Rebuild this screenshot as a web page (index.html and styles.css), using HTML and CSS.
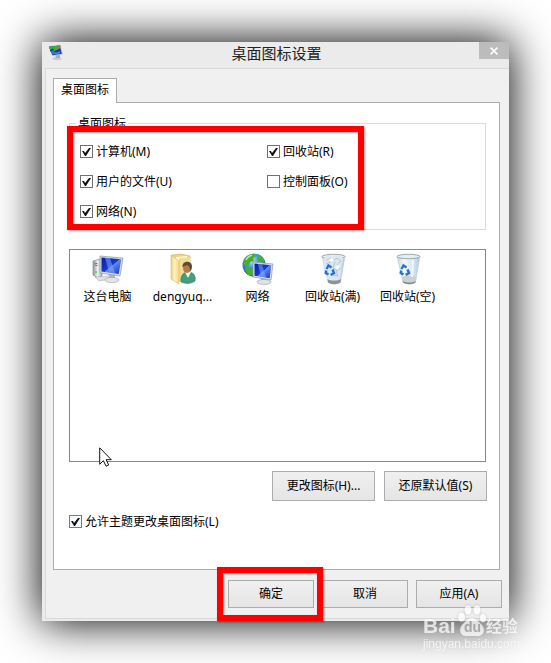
FILE: index.html
```html
<!DOCTYPE html>
<html lang="zh-CN">
<head>
<meta charset="utf-8">
<meta name="viewport" content="width=device-width">
<title>桌面图标设置</title>
<link rel="stylesheet" href="styles.css">
</head>
<body>
<main class="window">
  <header class="titlebar">
    <svg class="title-icon" viewBox="0 0 16 17" aria-hidden="true">
      <ellipse cx="9" cy="14.6" rx="4.5" ry="1.7" fill="#c9cccd"/>
      <path d="M7 11l5-1v4H8z" fill="#a9adb2"/>
      <path d="M.5 2l12-1.500 2.500 10-10.500 1.500z" fill="#c3cbd3"/>
      <path d="M1 2.800l10.800-1.300 2 8.300-9.500 1.500z" fill="#1c3fae"/>
      <path d="M1 2.800l10.300-1.300.7 3-4 1-2 2-3.500.5z" fill="#2fb33f"/>
      <path d="M2 6l3-1.500 1 1.500-3.500 1.500z" fill="#123a8c"/>
      <path d="M7.500 6l5-4" stroke="#e0662c" stroke-width="1.500"/>
      <path d="M4 9.500c2-1.500 5 1 8-1.500" stroke="#79b8f3" fill="none"/>
    </svg>
    <h1 class="title">桌面图标设置</h1>
    <button class="close" type="button" aria-label="关闭">
      <svg viewBox="0 0 8 8" aria-hidden="true"><path d="M.6.6l6.800 6.800M7.400.6L.6 7.400" stroke="#fff" stroke-width="1.700"/></svg>
    </button>
  </header>

  <form class="client">
    <button class="tab" type="button">桌面图标</button>
    <section class="panel">
      <fieldset class="group">
        <legend>桌面图标</legend>
        <div class="options">
          <label class="check"><input type="checkbox" checked>计算机(M)</label>
          <label class="check"><input type="checkbox" checked>回收站(R)</label>
          <label class="check"><input type="checkbox" checked>用户的文件(U)</label>
          <label class="check"><input type="checkbox">控制面板(O)</label>
          <label class="check"><input type="checkbox" checked>网络(N)</label>
        </div>
        <span class="mark mark-options"></span>
      </fieldset>

      <div class="list">
        <figure class="item">
          <svg viewBox="0 0 32 32" aria-hidden="true">
            <defs>
              <linearGradient id="screen" x1="0" y1="0" x2="1" y2="1"><stop offset="0" stop-color="#0b1fa0"/><stop offset=".5" stop-color="#1638d8"/><stop offset=".52" stop-color="#5d8cf4"/><stop offset="1" stop-color="#1130c0"/></linearGradient>
              <linearGradient id="metal" x1="0" y1="0" x2="1" y2="0"><stop offset="0" stop-color="#8d959b"/><stop offset=".5" stop-color="#eef1f2"/><stop offset="1" stop-color="#a7afb5"/></linearGradient>
            </defs>
            <path d="M1 8l7-2 2 1v16l-4 2-5-3z" fill="url(#metal)" stroke="#858d93" stroke-width=".7"/>
            <path d="M2.500 10l3 .7M2.500 12l3 .7" stroke="#687178"/><circle cx="4" cy="19" r="1" fill="#50c840"/>
            <path d="M3 24l12-1 3 3-11 2z" fill="#dce0e2" stroke="#a9afb3" stroke-width=".6"/>
            <path d="M16 20l7 1v5h-6z" fill="#aeb6bb"/><ellipse cx="20" cy="27" rx="7" ry="2.600" fill="#e0e4e5" stroke="#9ca5ab" stroke-width=".6"/>
            <path d="M8 3l23 2-3 18-20-3z" fill="#d7dde1" stroke="#8d98a2" stroke-width=".7"/>
            <path d="M9.500 4.500l19.800 1.800-2.600 14.700-17.200-2.500z" fill="url(#screen)"/>
            <path d="M18 5.300l5 14.900-6-.9-4-14.500z" fill="#86a7f8" opacity=".55"/>
          </svg>
          <figcaption>这台电脑</figcaption>
        </figure>
        <figure class="item">
          <svg viewBox="0 0 32 32" aria-hidden="true">
            <defs><linearGradient id="folder" x1="0" y1="0" x2="1" y2="0"><stop offset="0" stop-color="#ecd083"/><stop offset=".45" stop-color="#fff3b8"/><stop offset="1" stop-color="#f0d98a"/></linearGradient></defs>
            <path d="M5 2l9-1 9 2v23l-13 3z" fill="#ecd282" stroke="#cfae58" stroke-width=".6"/>
            <path d="M9 4l11-1v22H9z" fill="#fffbe0"/>
            <path d="M12 5l11-1v21l-11 4z" fill="#f3dd93"/>
            <path d="M4 2l8 6v23l-8-5z" fill="url(#folder)" stroke="#dabb62" stroke-width=".6"/>
            <path d="M14 29c-1-7 3-10 7-10 5 0 8 3 7 9-4 3-10 3-14 1z" fill="#439e7d" stroke="#287d5f" stroke-width=".6"/>
            <path d="M18 19l3 6 3-6z" fill="#eff8f2"/><ellipse cx="20" cy="15" rx="4" ry="5" fill="#b97849"/>
            <path d="M15.500 14c-.7-6 8-7 9.300-2 .7 3-.8 6-1.800 6 0-4-1-5-3-6-1 1-3 1-4.500 2z" fill="#5a4a3d"/>
          </svg>
          <figcaption>dengyuq...</figcaption>
        </figure>
        <figure class="item">
          <svg viewBox="0 0 32 32" aria-hidden="true">
            <defs><radialGradient id="globe" cx=".4" cy=".3" r=".7"><stop offset="0" stop-color="#b7e8fa"/><stop offset=".5" stop-color="#3490d4"/><stop offset="1" stop-color="#124c9d"/></radialGradient></defs>
            <circle cx="12" cy="12" r="11.500" fill="url(#globe)"/>
            <path d="M2 7c2-4 6-6 10-6l2 2-3 2 1 3-4 1-1 4-5-1zM15 1c4 1 7 4 8 8l-5 1-3-4 2-2zM3 15l5-1 4 3-1 5-3 1c-3-2-5-4-5-8z" fill="#48ad31"/>
            <path d="M4 7c1-3 4-4 6-5" fill="none" stroke="#c5ef9c" stroke-width="1.200"/>
            <path d="M19 22l6 1v5h-6z" fill="#a6afb6"/><ellipse cx="22" cy="29" rx="7" ry="2.500" fill="#dfe3e5" stroke="#98a3aa" stroke-width=".6"/>
            <path d="M11 9l20 2-2 16-18-3z" fill="#dbe1e5" stroke="#8998a6" stroke-width=".7"/>
            <path d="M12.500 10.500l16.800 1.800-1.600 13-15.200-2.500z" fill="url(#screen)"/>
            <path d="M20 11.300l4 13.300-5-.7-3-13z" fill="#8cadf9" opacity=".5"/>
          </svg>
          <figcaption>网络</figcaption>
        </figure>
        <figure class="item">
          <svg viewBox="0 0 32 32" aria-hidden="true">
            <defs>
              <linearGradient id="glass" x1="0" y1="0" x2="1" y2="0"><stop offset="0" stop-color="#c3d3e0"/><stop offset=".3" stop-color="#f5faff"/><stop offset=".75" stop-color="#cfe3f6"/><stop offset="1" stop-color="#b3c8db"/></linearGradient>
              <g id="recycle" fill="none" stroke="#2a72d0" stroke-width="2.500"><path d="M9.500 16l2-3.500 3 2"/><path d="M15.500 16.500l1.500 3.500-3.300 2"/><path d="M11.500 21.500l-2.700-1.500.4-2.500"/></g>
            </defs>
            <path d="M5 3h23l-4.500 26c-3 2.700-9.500 2.700-12.500 0z" fill="url(#glass)" stroke="#b9c8d4" stroke-width=".6"/>
            <path d="M10.500 26c4 2 9.500 2 13.500 0l-.5 3.500c-3 2.300-9.500 2.300-12.500 0z" fill="#8d9294"/>
            <ellipse cx="16.500" cy="3.500" rx="11.500" ry="2.200" fill="#e8eef2" stroke="#8e9598" stroke-width=".8"/>
            <path d="M6.500 5l5-3 4 2 5-2 6 3-2 7-1 2 .5 5-2.500 6-6 2-6-2-3-9z" fill="#dce7f1"/>
            <path d="M10 7l4-2 1 4 5-4 4 3-4 4 3 4-4 2 2 5-5-1M9 11l5-2M18 9l-2 6 5 3" fill="none" stroke="#a9bfd2" stroke-width=".9"/>
            <path d="M12 6l2 3 3-1-2-3zM20 12l3 1-2 4-3-2z" fill="#f8fcff"/>
            <use href="#recycle"/>
          </svg>
          <figcaption>回收站(满)</figcaption>
        </figure>
        <figure class="item">
          <svg viewBox="0 0 32 32" aria-hidden="true">
            <path d="M5 3h23l-4.500 26c-3 2.700-9.500 2.700-12.500 0z" fill="url(#glass)" stroke="#b9c8d4" stroke-width=".6"/>
            <path d="M10 24c4-2 10.500-2 14.500 0l-1 5c-3 2.500-9.500 2.500-12.500 0z" fill="#ccd1d4"/>
            <path d="M10.800 28c4 2 9 2 13 0l-.3 1.500c-3 2.300-9.500 2.300-12.500 0z" fill="#858a8d"/>
            <ellipse cx="16.500" cy="3.500" rx="11.500" ry="2.200" fill="#e3effa" stroke="#8e9598" stroke-width=".8"/>
            <path d="M21 7l-1 17" stroke="#fff" stroke-width="2" opacity=".7"/>
            <use href="#recycle"/>
          </svg>
          <figcaption>回收站(空)</figcaption>
        </figure>
        <svg class="cursor" viewBox="0 0 13 20" aria-hidden="true"><path d="M.7.8v16.500l3.700-3.600 2.700 5.500 2.600-1.200-2.600-5.300h5.200z" fill="#fff" stroke="#111" stroke-width="1"/></svg>
      </div>

      <div class="actions">
        <button class="btn btn-wide" type="button">更改图标(H)...</button>
        <button class="btn btn-wide" type="button">还原默认值(S)</button>
      </div>
      <label class="check check-theme"><input type="checkbox" checked>允许主题更改桌面图标(L)</label>
    </section>

    <footer class="footer">
      <div class="confirm">
        <button class="btn" type="button">确定</button>
        <span class="mark mark-confirm"></span>
      </div>
      <button class="btn" type="button">取消</button>
      <button class="btn" type="button">应用(A)</button>
    </footer>
  </form>

  <div class="watermark">
    <div class="brand">
      <span class="bai">Bai</span>
      <span class="paw">
        <svg viewBox="0 0 28 31" aria-hidden="true"><g fill="#fff"><ellipse cx="3.500" cy="12" rx="3.500" ry="4.500"/><ellipse cx="10" cy="5" rx="3.500" ry="4.800"/><ellipse cx="19" cy="5" rx="3.500" ry="4.800"/><ellipse cx="25" cy="13" rx="3" ry="4.300"/><path d="M14 13c4 0 6 3 9 6 5 5 3 12-3 12H8c-6 0-8-7-3-12 3-3 5-6 9-6z"/></g></svg>
        <span class="du">du</span>
      </span>
      <span class="jingyan">经验</span>
    </div>
    <div class="site">jingyan.baidu.com</div>
  </div>
</main>
</body>
</html>
```
FILE: styles.css
```css
* { box-sizing: border-box; }

body {
  margin: 0;
  padding: 42px;
  background: #fff;
  color: #000;
  font: 12px/16px "Noto Sans", "Noto Sans CJK SC", sans-serif;
}

button { font: inherit; color: inherit; padding: 0; }

.window {
  position: relative;
  background: #ebebeb;
  box-shadow: 0 0 42px 1px #000;
  padding-bottom: 2px;
}

.titlebar {
  display: grid;
  grid-template-columns: 32px 1fr 30px;
  height: 26px;
}

.title-icon { width: 16px; height: 17px; margin: 2px 0 0 6px; }

.title {
  margin: 0;
  text-align: center;
  font-size: 15px;
  font-weight: 400;
  line-height: 22px;
  color: #222;
}

.close {
  display: flex;
  align-items: center;
  justify-content: center;
  height: 17px;
  border: 0;
  background: #bcbcbc;
}

.close svg { width: 8px; height: 8px; }

.client {
  margin-left: 3px;
  padding: 9px 7px 10px;
  border: solid #d9d9d9;
  border-width: 1px 0 1px 1px;
  background: #f0f0f0;
}

.tab {
  display: block;
  position: relative;
  width: 64px;
  height: 25px;
  margin-bottom: -1px;
  padding-bottom: 2px;
  border: 1px solid #acacac;
  border-bottom: 0;
  background: #fff;
}

.panel {
  margin-right: 2px;
  padding: 13px 12px 41px 15px;
  border: 1px solid #acacac;
  background: #fff;
}

.group {
  position: relative;
  margin: 0 1px 0 0;
  padding: 0;
  border: 1px solid #dcdcdc;
}

.group legend {
  margin-left: 6px;
  padding: 0 2px;
  line-height: 15px;
}

.options {
  display: grid;
  grid-template-columns: 187px 1fr;
  gap: 17px 0;
  padding: 14px 10px 11px;
}

.check {
  display: flex;
  align-items: center;
  gap: 3px;
  height: 13px;
}

.check input {
  appearance: none;
  flex: none;
  width: 13px;
  height: 13px;
  margin: 0;
  border: 1px solid #707070;
  background: #fff;
}

.check input:checked::before {
  content: "";
  display: block;
  width: 11px;
  height: 11px;
  background: #111;
  clip-path: polygon(1px 5px, 3px 5px, 4px 7px, 8px 2px, 10px 2px, 5px 10px, 4px 10px);
}

.mark {
  position: absolute;
  border: 6px solid #f00;
  box-shadow: 1px 1px 2px rgba(0, 0, 0, .4), inset 1px 1px 2px rgba(0, 0, 0, .4);
  pointer-events: none;
}

.mark-options { left: -3px; bottom: -1px; width: 297px; height: 104px; }

.list {
  position: relative;
  display: flex;
  align-items: flex-start;
  height: 213px;
  margin: 19px 1px 0 0;
  padding: 3px 0;
  border: 1px solid #828790;
}

.item { width: 75px; margin: 0; text-align: center; }
.item svg { display: block; width: 32px; height: 32px; margin: 0 auto; }
.item figcaption { margin-top: 4px; }

.cursor { position: absolute; left: 29px; top: 197px; width: 13px; height: 20px; }

.actions {
  display: flex;
  justify-content: flex-end;
  gap: 9px;
  margin-top: 9px;
}

.btn {
  width: 86px;
  height: 28px;
  border: 1px solid #acacac;
  background: linear-gradient(#f0f0f0, #e5e5e5);
}

.btn-wide { width: 103px; height: 30px; }

.check-theme { margin-top: 14px; }
.check-theme input { border-color: #3c8ad0; background: #f3f9ff; }

.footer {
  display: flex;
  justify-content: flex-end;
  gap: 8px;
  margin-top: 10px;
}

.confirm { position: relative; }
.mark-confirm { left: -11px; top: -13px; width: 106px; height: 54px; }

.watermark {
  position: absolute;
  right: -12px;
  bottom: -30px;
  width: 98px;
  color: #fff;
  opacity: .75;
  text-shadow: 0 0 1px #aaa;
  pointer-events: none;
}

.brand {
  display: flex;
  align-items: flex-end;
  height: 31px;
  font-weight: 700;
}

.bai { width: 35px; font: 700 21px/20px "Liberation Sans", sans-serif; }
.paw { position: relative; width: 28px; height: 31px; }
.paw svg { display: block; width: 28px; height: 31px; filter: drop-shadow(0 0 1px #aaa); }
.du {
  position: absolute;
  left: 6px;
  bottom: 1px;
  color: #aaa;
  font: 700 14px/16px "Liberation Sans", sans-serif;
  text-shadow: none;
}
.jingyan { font-size: 16px; line-height: 20px; }
.site { margin-top: 1px; font: 12px/14px "Liberation Sans", sans-serif; text-shadow: 0 0 1px #ccc; }
```
